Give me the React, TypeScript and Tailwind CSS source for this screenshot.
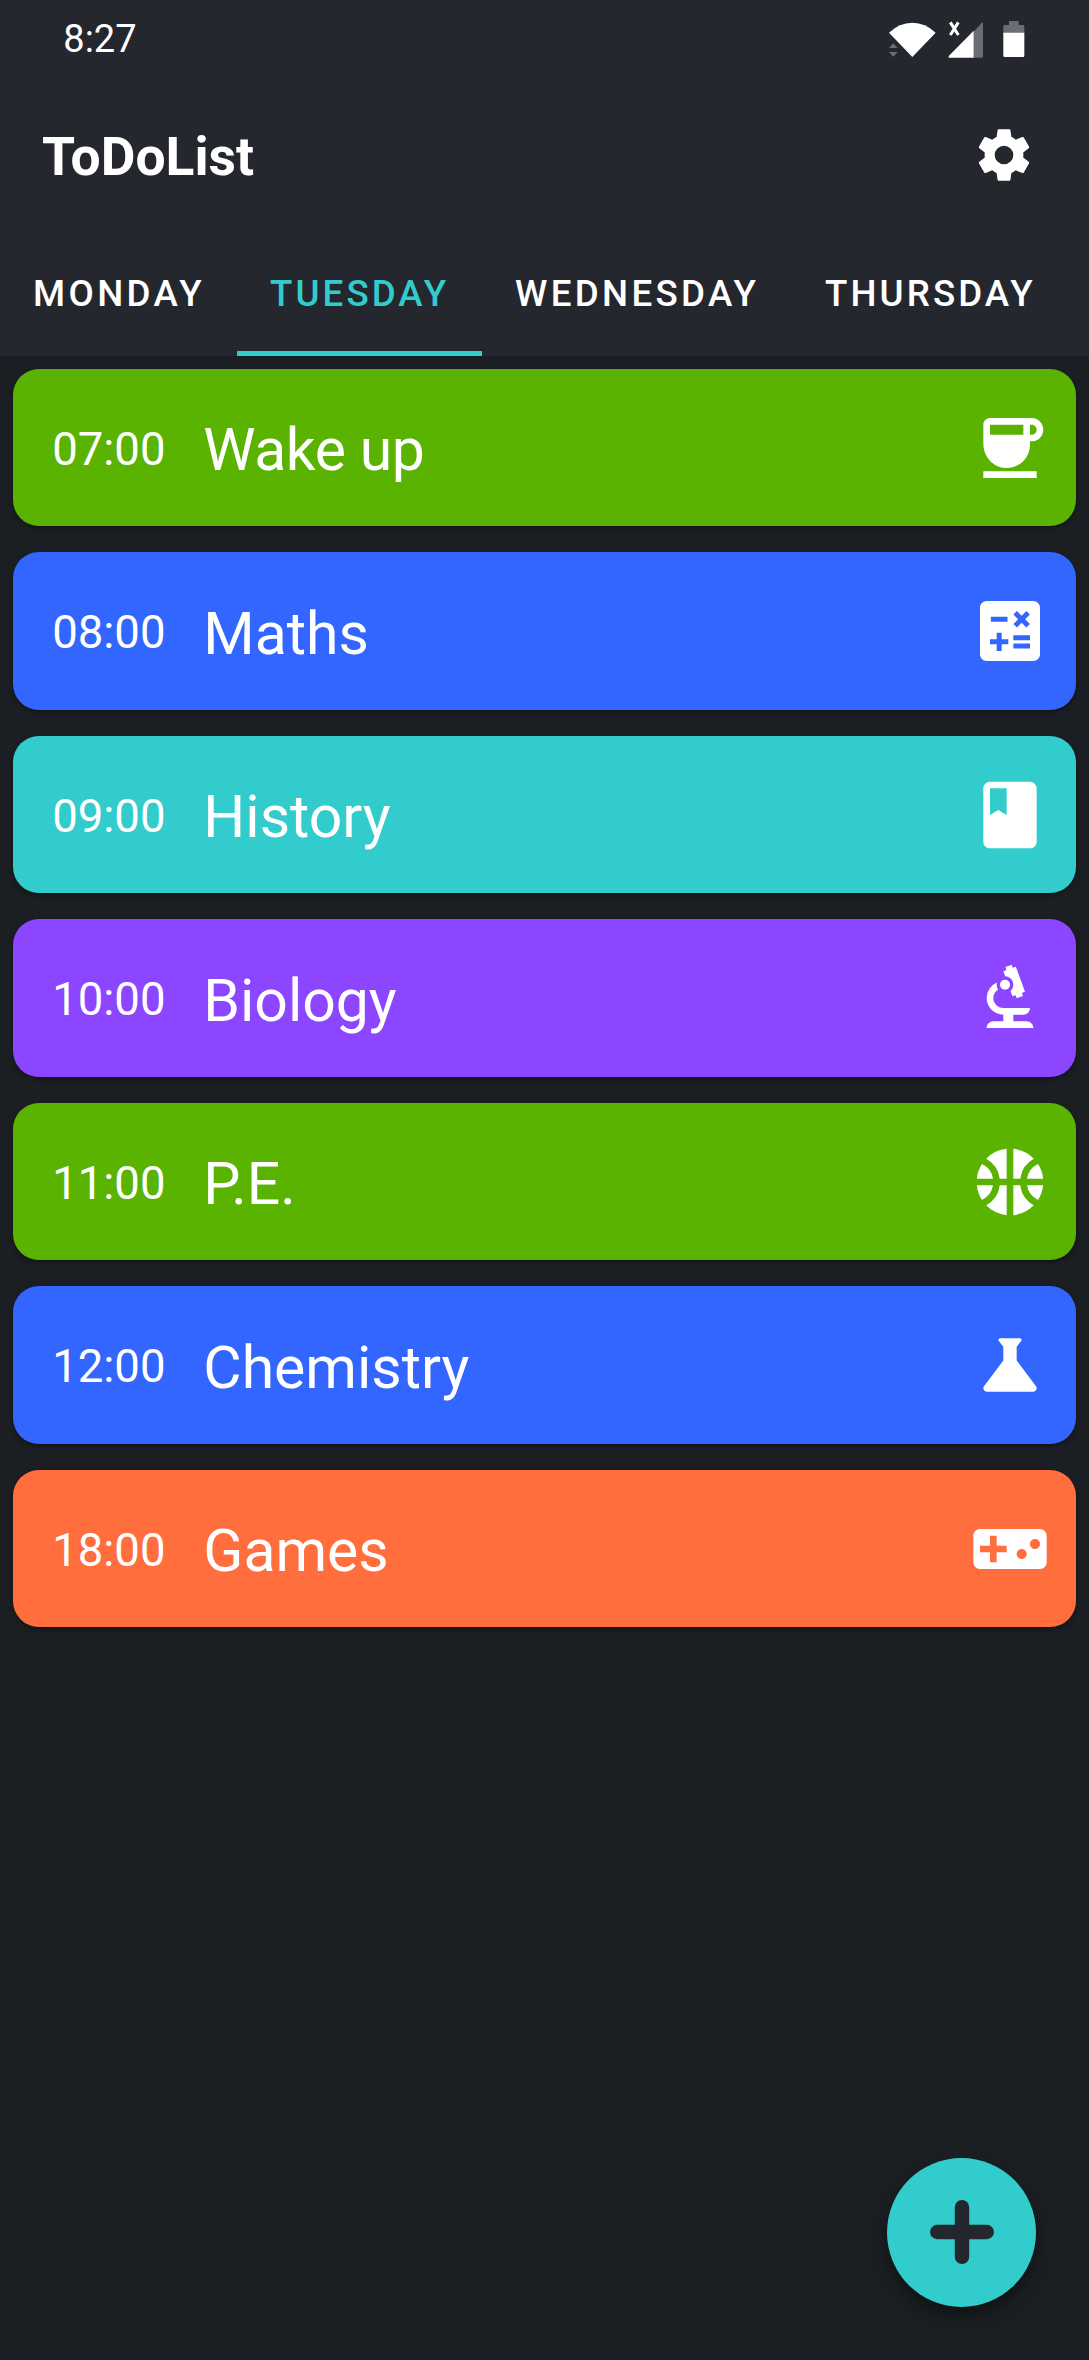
import React from "react";
import type { IconType } from "react-icons";
import {
  MdBiotech,
  MdBook,
  MdCalculate,
  MdCoffee,
  MdScience,
  MdSportsBasketball,
  MdVideogameAsset,
} from "react-icons/md";

type Task = { time: string; name: string; color: string; Icon: IconType; tracking?: string };

const tasks: Task[] = [
  { time: "07:00", name: "Wake up", color: "bg-[#5ab300]", Icon: MdCoffee, tracking: "tracking-[-0.4px]" },
  { time: "08:00", name: "Maths", color: "bg-[#3366ff]", Icon: MdCalculate },
  { time: "09:00", name: "History", color: "bg-[#33cccc]", Icon: MdBook },
  { time: "10:00", name: "Biology", color: "bg-[#8c46ff]", Icon: MdBiotech },
  { time: "11:00", name: "P.E.", color: "bg-[#5ab300]", Icon: MdSportsBasketball },
  { time: "12:00", name: "Chemistry", color: "bg-[#3366ff]", Icon: MdScience },
  { time: "18:00", name: "Games", color: "bg-[#ff6e3c]", Icon: MdVideogameAsset },
];

const tabs = [
  { label: "Monday", size: "w-[237px] pl-[33px] tracking-[3.4px]" },
  { label: "Tuesday", size: "w-[245px] pl-[33px] tracking-[3.1px]", active: true },
  { label: "Wednesday", size: "w-[310px] pl-[33px] tracking-[3.35px]" },
  { label: "Thursday", size: "w-[297px] pl-[33px] tracking-[3.1px]" },
];

function StatusIcons() {
  return (
    <svg viewBox="80 60 420 120" className="h-[40px] w-[140px]" aria-hidden="true">
      <path d="M86 101Q117 71 156 71T226 101L156 174Z" fill="#fff" />
      <path d="M86 147L99 133L112 147ZM86 159H112L99 173Z" fill="#6b6d73" />
      <path d="M340 98L364 72Q368 68 368 74V172Q368 176 364 176H340Z" fill="#6b6d73" />
      <path d="M340 95V176H268Q262 176 266 170Z" fill="#fff" />
      <path d="M270 70L294 108M294 70L270 108" stroke="#fff" strokeWidth="9" />
      <path d="M446 66H475V78H488Q492 78 492 82V102H429V82Q429 78 433 78H446Z" fill="#6b6d73" />
      <path d="M429 101H492V170Q492 174 488 174H433Q429 174 429 170Z" fill="#fff" />
    </svg>
  );
}

function GearIcon() {
  return (
    <svg viewBox="0 0 24 24" className="size-[62px]" fill="currentColor" aria-hidden="true">
      <path d="M19.43 12.98c.04-.32.07-.64.07-.98s-.03-.66-.07-.98l2.11-1.65c.19-.15.24-.42.12-.64l-2-3.46c-.12-.22-.39-.3-.61-.22l-2.49 1c-.52-.4-1.08-.73-1.69-.98l-.38-2.65C14.46 2.18 14.25 2 14 2h-4c-.25 0-.46.18-.49.42l-.38 2.65c-.61.25-1.17.59-1.69.98l-2.49-1c-.23-.09-.49 0-.61.22l-2 3.46c-.13.22-.07.49.12.64l2.11 1.65c-.04.32-.07.65-.07.98s.03.66.07.98l-2.11 1.65c-.19.15-.24.42-.12.64l2 3.46c.12.22.39.3.61.22l2.49-1c.52.4 1.08.73 1.69.98l.38 2.65c.03.24.24.42.49.42h4c.25 0 .46-.18.49-.42l.38-2.65c.61-.25 1.17-.59 1.69-.98l2.49 1c.23.09.49 0 .61-.22l2-3.46c.12-.22.07-.49-.12-.64l-2.11-1.65zM12 15.6a3.6 3.6 0 1 1 0-7.2 3.6 3.6 0 0 1 0 7.2z" />
    </svg>
  );
}

function TaskCard({ time, name, color, Icon, tracking = "" }: Task) {
  return (
    <li
      className={`flex h-[157.3px] items-center rounded-[26px] pl-[39.2px] pr-[26.3px] shadow-[0_2px_5px_rgba(0,0,0,0.38)] ${color}`}
    >
      <span className="pt-[4px] text-[45.5px] leading-none">{time}</span>
      <span className={`ml-[37.8px] flex-1 pt-[6px] text-[58.9px] leading-none ${tracking}`}>
        {name}
      </span>
      <Icon className="size-[80px]" />
    </li>
  );
}

export default function App() {
  return (
    <div className="relative h-[2360px] w-[1089px] overflow-hidden bg-[#1b1f23] font-[Roboto,sans-serif] text-white">
      <header className="bg-[#25272f]">
        <div className="flex h-[78px] items-center justify-between pl-[63.3px] pr-[62.3px]">
          <span className="text-[38px] leading-none">8:27</span>
          <StatusIcons />
        </div>
        <div className="flex h-[158.5px] items-center justify-between pl-[42px] pr-[54.2px]">
          <h1 className="-mt-[1px] text-[53.4px] leading-none font-bold">ToDoList</h1>
          <button className="-mt-[5px]" aria-label="Settings">
            <GearIcon />
          </button>
        </div>
        <nav className="flex h-[119.5px] text-[36.7px] font-medium uppercase">
          {tabs.map(({ label, size, active }) => (
            <button
              key={label}
              className={`shrink-0 border-b-[5px] pt-[2px] text-left leading-none uppercase ${size} ${
                active ? "border-[#33cccc] text-[#33cccc]" : "border-transparent"
              }`}
            >
              {label}
            </button>
          ))}
        </nav>
      </header>

      <ul className="flex flex-col gap-[26.2px] px-[13px] pt-[13px]">
        {tasks.map((task) => (
          <TaskCard key={task.time} {...task} />
        ))}
      </ul>

      <button
        aria-label="Add task"
        className="absolute top-[2158px] left-[887.3px] flex size-[148.6px] items-center justify-center rounded-full bg-[#33cccc] text-[#25272f] shadow-[0_9px_18px_rgba(0,0,0,0.4)]"
      >
        <svg viewBox="0 0 64 64" className="size-[64px]" stroke="currentColor" aria-hidden="true">
          <path d="M32 7.2V56.8M7.2 32H56.8" strokeWidth="14.4" strokeLinecap="round" />
        </svg>
      </button>
    </div>
  );
}
